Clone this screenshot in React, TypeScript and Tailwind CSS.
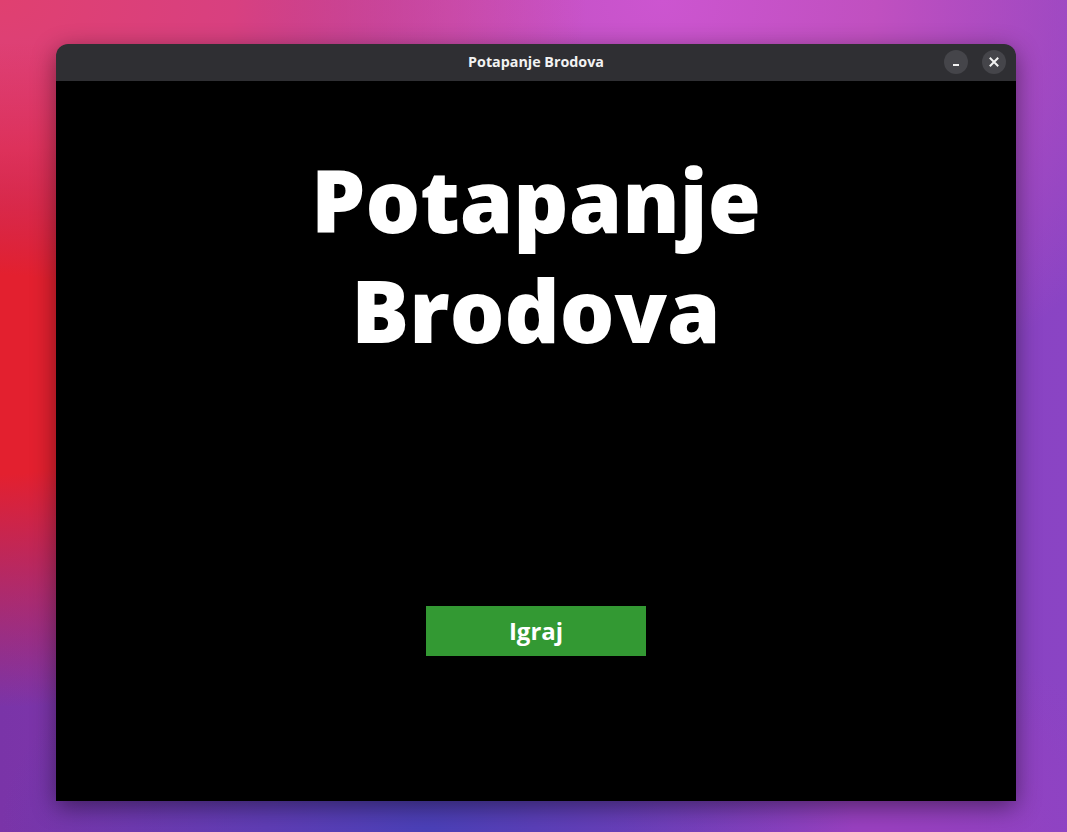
export default function App() {
  return (
    <div className="relative w-[1067px] h-[832px] overflow-hidden pl-[56px] pt-[44px] bg-[radial-gradient(ellipse_45%_40%_at_0%_45%,#e3202f_0%,#e3202f_30%,transparent_100%),radial-gradient(ellipse_55%_45%_at_0%_0%,#e04070_0%,#d84080_40%,transparent_100%),radial-gradient(ellipse_50%_55%_at_62%_0%,#cc55d0_0%,#c050c0_40%,transparent_100%),radial-gradient(ellipse_40%_30%_at_40%_100%,#4a40b8_0%,transparent_100%),radial-gradient(ellipse_25%_25%_at_82%_100%,#9a40c0_0%,transparent_100%),linear-gradient(90deg,#7a34a8_0%,#8a3cb8_50%,#8a44c4_100%)] font-['Open_Sans',sans-serif]">
      <div className="w-[960px] h-[757px] flex flex-col rounded-t-[12px] overflow-hidden shadow-[0_6px_24px_rgba(0,0,0,0.45)]">
        <div className="relative h-[37px] bg-[#2f2f33] flex items-center justify-center shrink-0">
          <span className="text-[14.3px] font-bold text-[#f2f2f2] leading-none">Potapanje Brodova</span>
          <div className="absolute right-[10px] top-[6px] flex gap-[14px]">
            <div className="w-[24px] h-[24px] rounded-full bg-[#45454a] flex items-center justify-center">
              <svg width="10" height="10" viewBox="0 0 10 10">
                <rect x="2" y="7" width="6" height="2" fill="#f2f2f2" />
              </svg>
            </div>
            <div className="w-[24px] h-[24px] rounded-full bg-[#45454a] flex items-center justify-center">
              <svg width="10" height="10" viewBox="0 0 10 10">
                <path d="M1.5 1.5 L8.5 8.5 M8.5 1.5 L1.5 8.5" stroke="#f2f2f2" strokeWidth="2" strokeLinecap="square" />
              </svg>
            </div>
          </div>
        </div>
        <div className="flex-1 bg-black flex flex-col items-center">
          <h1 className="mt-[64px] text-[86px] leading-[110px] font-extrabold text-white text-center">
            Potapanje
            <br />
            Brodova
          </h1>
          <button className="mt-[241px] w-[220px] h-[50px] bg-[#339933] text-white text-[24px] font-bold flex items-center justify-center">
            Igraj
          </button>
        </div>
      </div>
    </div>
  );
}
